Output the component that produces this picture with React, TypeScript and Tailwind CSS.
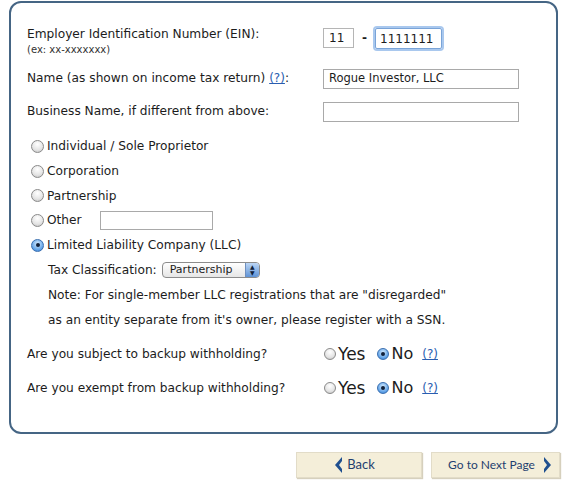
import React from "react";

const font = { fontFamily: '"DejaVu Sans", Verdana, sans-serif' };

function Radio({ checked = false, small = false }: { checked?: boolean; small?: boolean }) {
  const size = small ? "h-[12px] w-[12px]" : "h-[13px] w-[13px]";
  if (checked) {
    return (
      <span
        className={`${size} inline-flex shrink-0 items-center justify-center rounded-full border border-[#3a6fb0] bg-[radial-gradient(circle_at_50%_35%,#d6ecff,#5b9fe6_70%,#2f6fc0)]`}
      >
        <span className="h-[4px] w-[4px] rounded-full bg-[#10203a]" />
      </span>
    );
  }
  return (
    <span
      className={`${size} inline-block shrink-0 rounded-full border border-[#8a8a8a] bg-[radial-gradient(circle_at_50%_30%,#ffffff,#e4e4e4_60%,#bdbdbd)]`}
    />
  );
}

function Help() {
  return <span className="text-[12px] text-[#2a5db0] underline">(?)</span>;
}

function Chevron({ dir }: { dir: "left" | "right" }) {
  return (
    <svg width="10" height="18" viewBox="0 0 10 18">
      {dir === "left" ? (
        <path d="M9 1 L2 9 L9 17 L9 13 L6 9 L9 5 Z" fill="#1f4f8f" />
      ) : (
        <path d="M1 1 L8 9 L1 17 L1 13 L4 9 L1 5 Z" fill="#1f4f8f" />
      )}
    </svg>
  );
}

function YesNo() {
  return (
    <div className="flex items-center gap-[2px]">
      <Radio small />
      <span className="text-[17px]">Yes</span>
      <span className="ml-[8px]" />
      <Radio small checked />
      <span className="text-[16px]">No</span>
      <span className="ml-[5px]" />
      <Help />
    </div>
  );
}

export default function App() {
  const options = ["Individual / Sole Proprietor", "Corporation", "Partnership"];
  return (
    <div className="h-[486px] w-[563px] bg-white text-[#1c1c1c]" style={font}>
      <div className="ml-[9px] mt-[1px] h-[433px] w-[549px] rounded-[12px] border-2 border-[#456584] pl-[16px] pr-[36px] pt-[21px] text-[12.2px]">
        <div className="flex h-[38px]">
          <div className="w-[296px]">
            <div className="leading-[20px]">Employer Identification Number (EIN):</div>
            <div className="text-[10px] leading-[12px] text-[#333]">(ex: xx-xxxxxxx)</div>
          </div>
          <div className="flex items-start pt-[4px]">
            <div className="flex h-[20px] w-[31px] items-center border border-[#b5b5b5] pl-[5px] text-[12px]">11</div>
            <span className="mx-[8px] mt-[1px] font-bold">-</span>
            <div className="flex h-[21px] w-[67px] items-center rounded-[2px] border border-[#7aa4d8] pl-[4px] text-[12px] shadow-[0_0_0_2px_#a9c8ee]">
              1111111
            </div>
          </div>
        </div>

        <div className="flex h-[33px] items-center">
          <div className="w-[296px]">
            Name (as shown on income tax return) <Help />:
          </div>
          <div className="flex h-[20px] w-[196px] items-center border border-[#a9a9a9] pl-[5px] text-[11.5px]">
            Rogue Investor, LLC
          </div>
        </div>

        <div className="flex h-[33px] items-center">
          <div className="w-[296px]">Business Name, if different from above:</div>
          <div className="h-[20px] w-[196px] border border-[#a9a9a9]" />
        </div>

        <div className="mt-[6px] pl-[4px]">
          {options.map((o) => (
            <div key={o} className="flex h-[24.7px] items-center gap-[3px]">
              <Radio />
              <span>{o}</span>
            </div>
          ))}
          <div className="flex h-[24.7px] items-center gap-[3px]">
            <Radio />
            <span className="w-[50px]">Other</span>
            <div className="h-[19px] w-[113px] border border-[#a9a9a9]" />
          </div>
          <div className="flex h-[24.7px] items-center gap-[3px]">
            <Radio checked />
            <span>Limited Liability Company (LLC)</span>
          </div>
        </div>

        <div className="pl-[21px]">
          <div className="flex h-[25px] items-center">
            <span className="mr-[5px]">Tax Classification:</span>
            <div className="flex h-[16px] w-[98px] items-center overflow-hidden rounded-[4px] border border-[#8c8c8c] bg-[linear-gradient(#ffffff,#e6e6e6)] text-[11px]">
              <span className="flex-1 pl-[7px]">Partnership</span>
              <span className="flex h-full w-[14px] flex-col items-center justify-center border-l border-[#6e8fbf] bg-[linear-gradient(#bcd6f5,#5f93d6)] text-[6px] leading-[6px] text-[#10203a]">
                <span>▲</span>
                <span>▼</span>
              </span>
            </div>
          </div>
          <div className="flex h-[25px] items-center">
            Note: For single-member LLC registrations that are "disregarded"
          </div>
          <div className="flex h-[25px] items-center">
            as an entity separate from it's owner, please register with a SSN.
          </div>
        </div>

        <div className="mt-[5px] flex h-[34px] items-center">
          <div className="w-[297px]">Are you subject to backup withholding?</div>
          <YesNo />
        </div>
        <div className="flex h-[34px] items-center">
          <div className="w-[297px]">Are you exempt from backup withholding?</div>
          <YesNo />
        </div>
      </div>

      <div className="mt-[18px] flex justify-end gap-[9px] pr-[3px]" style={{ fontFamily: "Lato, sans-serif" }}>
        <div className="flex h-[26px] w-[126px] items-center justify-center gap-[4px] border border-[#e2dcc8] bg-[#f4eed9] pr-[10px] text-[13px] text-[#1f3f6f] shadow-[1px_1px_1px_#d6d0bd]">
          <Chevron dir="left" />
          <span>Back</span>
        </div>
        <div className="flex h-[26px] w-[129px] items-center justify-center gap-[8px] border border-[#e2dcc8] bg-[#f4eed9] pl-[10px] text-[12px] text-[#1f3f6f] shadow-[1px_1px_1px_#d6d0bd]">
          <span>Go to Next Page</span>
          <Chevron dir="right" />
        </div>
      </div>
    </div>
  );
}
